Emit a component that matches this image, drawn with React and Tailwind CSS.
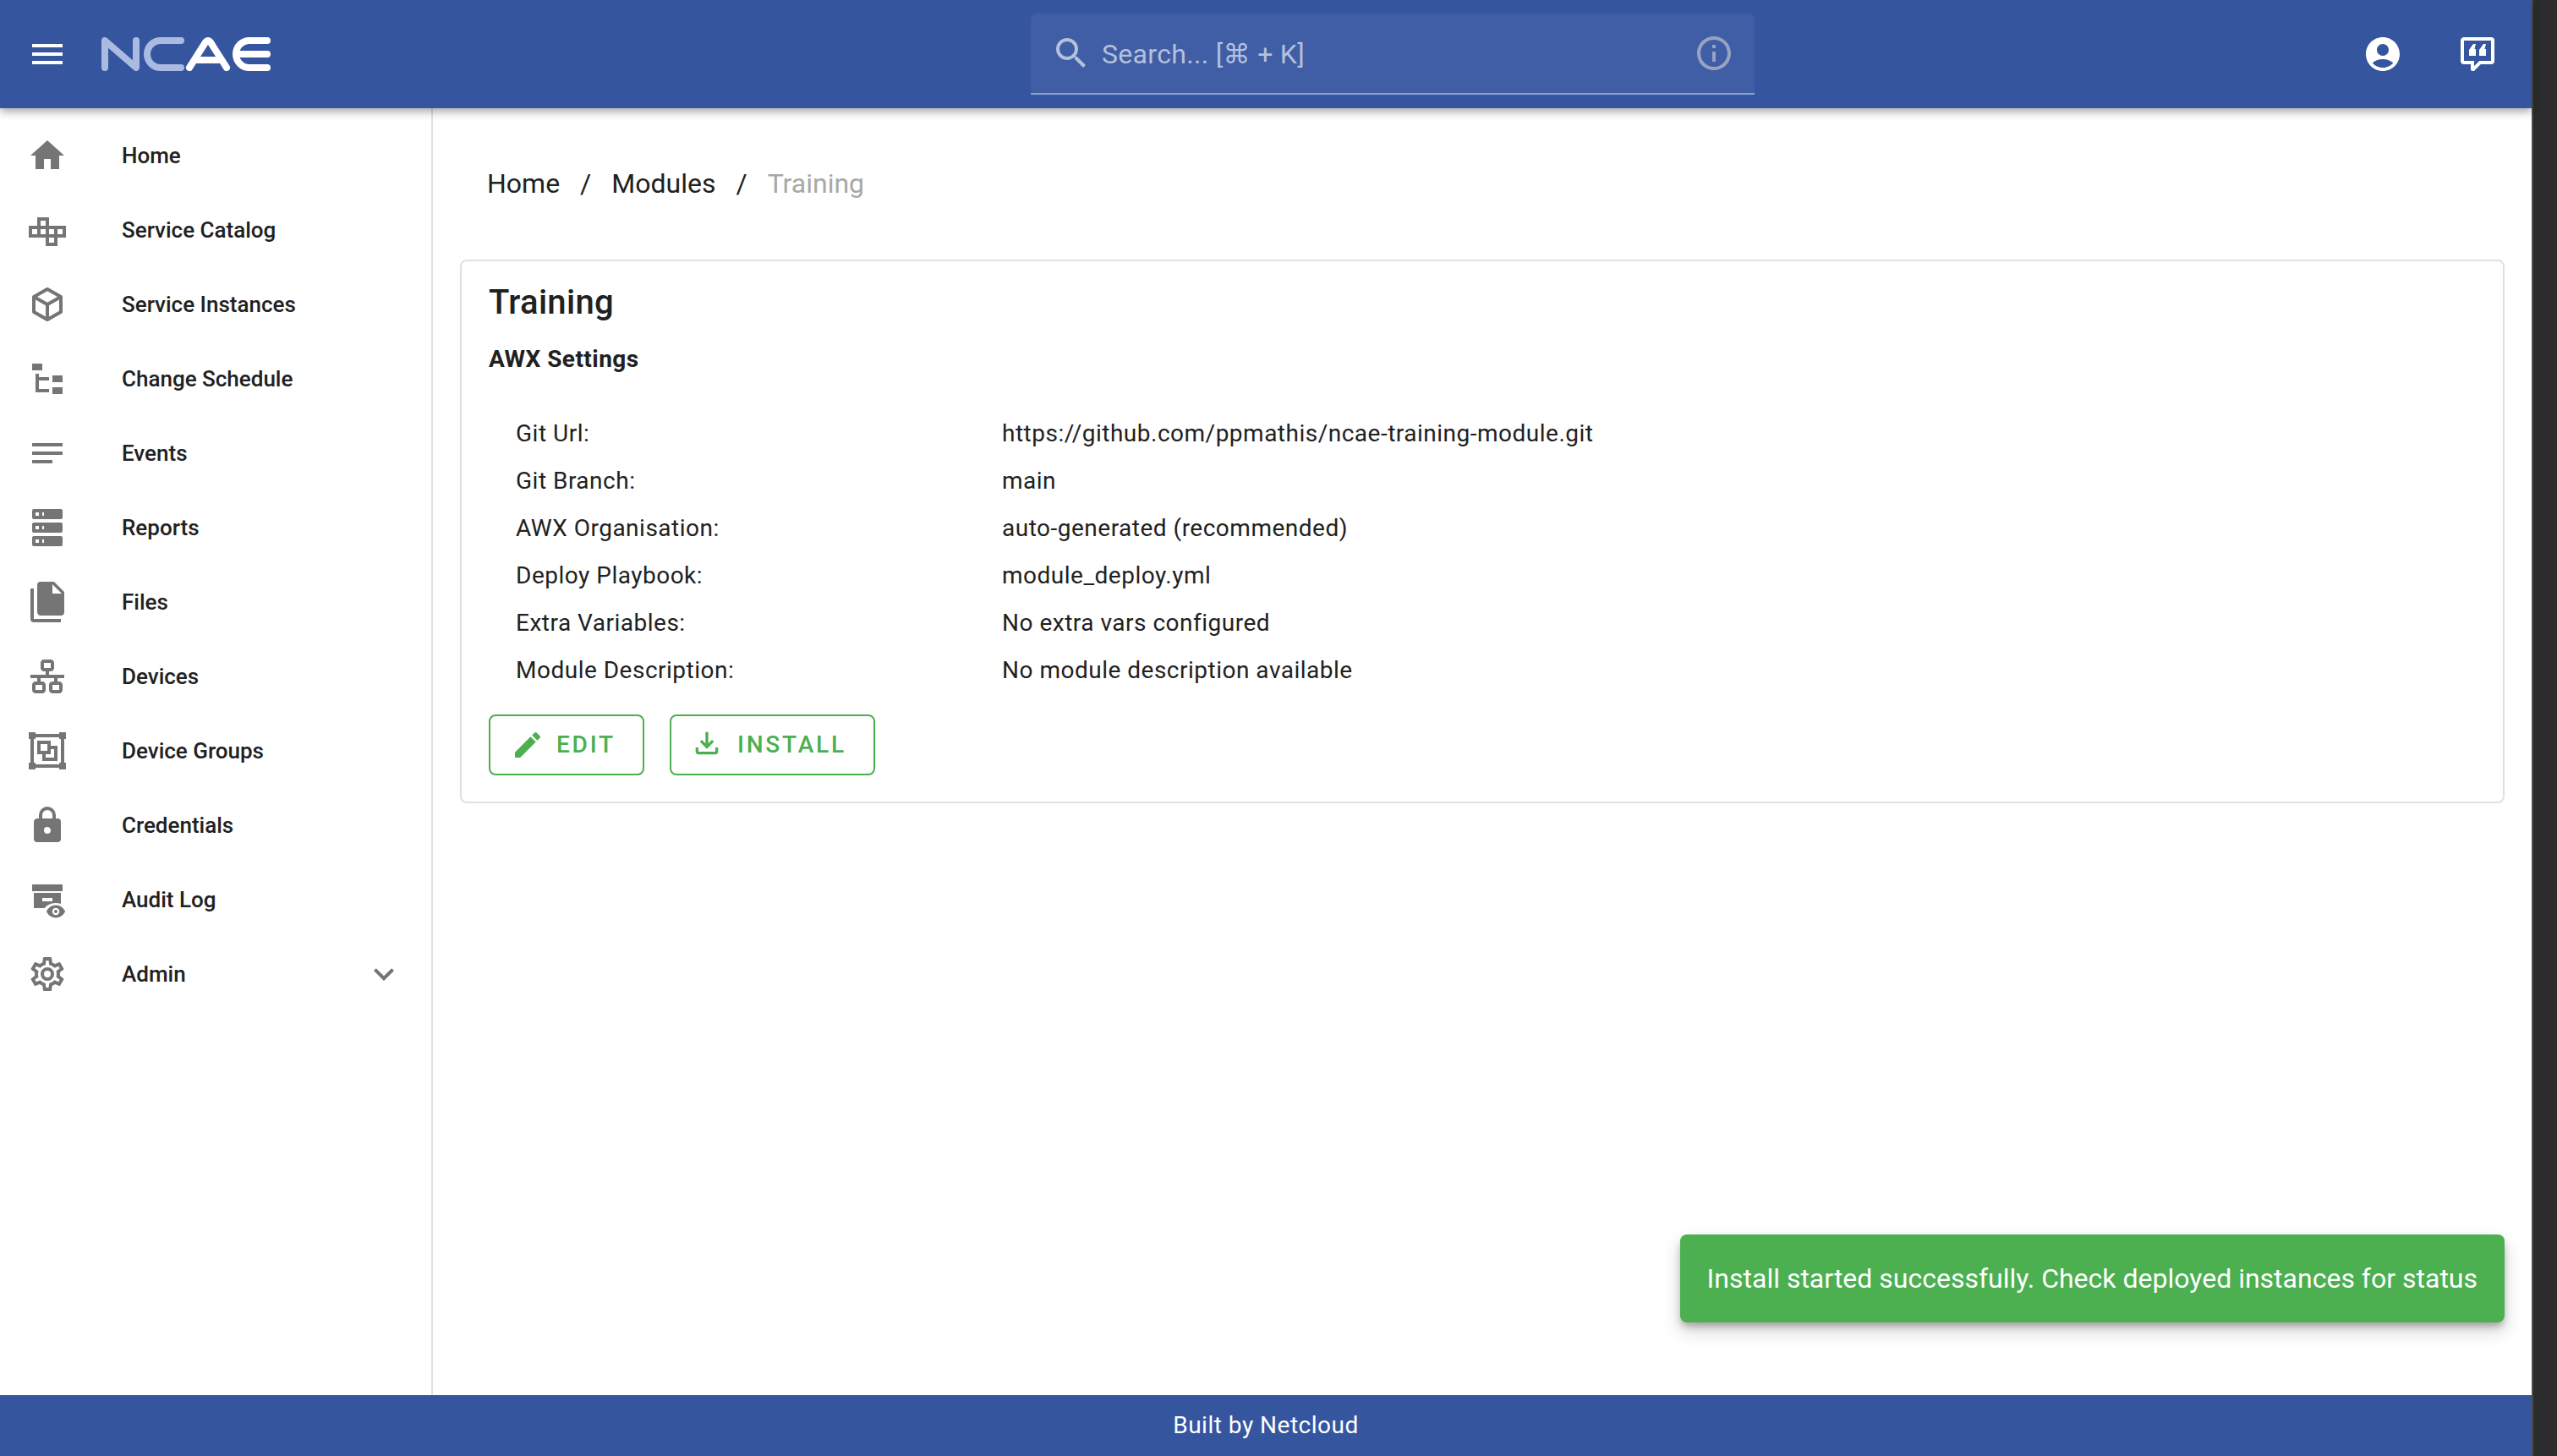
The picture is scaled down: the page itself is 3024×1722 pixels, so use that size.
import React from "react";
import {
  MdMenu,
  MdSearch,
  MdInfoOutline,
  MdAccountCircle,
  MdHome,
  MdNotes,
  MdExpandMore,
  MdEdit,
  MdOutlineFileDownload,
} from "react-icons/md";

const Icon = ({ d }) => (
  <svg viewBox="0 0 24 24" className="w-12 h-12 fill-current">
    <path d={d} />
  </svg>
);

const CatalogIcon = () => (
  <svg viewBox="0 0 24 24" className="w-12 h-12 fill-none stroke-current" strokeWidth="2">
    <path d="M2 10.5H22V15.5H2ZM7 15.5V5.5H12V20.5H17V10.5" />
  </svg>
);

const AuditIcon = () => (
  <svg viewBox="0 0 24 24" className="w-12 h-12 fill-current">
    <path d="M3 3H21V7H3ZM4 8H20V17H4ZM9 11V13H15V11Z" fillRule="evenodd" />
    <ellipse cx="17" cy="19" rx="7.2" ry="5" className="fill-white" />
    <path d="M11.5 19C12.4 16.8 14.5 15.3 17 15.3C19.5 15.3 21.6 16.8 22.5 19C21.6 21.2 19.5 22.7 17 22.7C14.5 22.7 12.4 21.2 11.5 19Z" />
    <circle cx="17" cy="19" r="2.1" className="fill-white" />
    <circle cx="17" cy="19" r="1" />
  </svg>
);

const navItems = [
  { label: "Home", icon: <MdHome className="w-12 h-12" /> },
  { label: "Service Catalog", icon: <CatalogIcon /> },
  {
    label: "Service Instances",
    icon: (
      <Icon d="M21,16.5C21,16.88 20.79,17.21 20.47,17.38L12.57,21.82C12.41,21.94 12.21,22 12,22C11.79,22 11.59,21.94 11.43,21.82L3.53,17.38C3.21,17.21 3,16.88 3,16.5V7.5C3,7.12 3.21,6.79 3.53,6.62L11.43,2.18C11.59,2.06 11.79,2 12,2C12.21,2 12.41,2.06 12.57,2.18L20.47,6.62C20.79,6.79 21,7.12 21,7.5V16.5M12,4.15L6.04,7.5L12,10.85L17.96,7.5L12,4.15M5,15.91L11,19.29V12.58L5,9.21V15.91M19,15.91V9.21L13,12.58V19.29L19,15.91Z" />
    ),
  },
  {
    label: "Change Schedule",
    icon: <Icon d="M3,3H9V7H3V3M15,10H21V14H15V10M15,17H21V21H15V17M13,13H7V18H13V20H7L5,20V9H7V11H13V13Z" />,
  },
  { label: "Events", icon: <MdNotes className="w-12 h-12" /> },
  {
    label: "Reports",
    icon: (
      <Icon d="M4,1H20A1,1 0 0,1 21,2V6A1,1 0 0,1 20,7H4A1,1 0 0,1 3,6V2A1,1 0 0,1 4,1M4,9H20A1,1 0 0,1 21,10V14A1,1 0 0,1 20,15H4A1,1 0 0,1 3,14V10A1,1 0 0,1 4,9M4,17H20A1,1 0 0,1 21,18V22A1,1 0 0,1 20,23H4A1,1 0 0,1 3,22V18A1,1 0 0,1 4,17M9,5H10V3H9V5M9,13H10V11H9V13M9,21H10V19H9V21M5,3V5H7V3H5M5,11V13H7V11H5M5,19V21H7V19H5Z" />
    ),
  },
  {
    label: "Files",
    icon: (
      <Icon d="M15,7H20.5L15,1.5V7M8,0H16L22,6V18A2,2 0 0,1 20,20H8C6.89,20 6,19.1 6,18V2A2,2 0 0,1 8,0M4,4V22H20V24H4A2,2 0 0,1 2,22V4H4Z" />
    ),
  },
  {
    label: "Devices",
    icon: (
      <Icon d="M10,2C8.89,2 8,2.89 8,4V7C8,8.11 8.89,9 10,9H11V11H2V13H6V15H5C3.89,15 3,15.89 3,17V20C3,21.11 3.89,22 5,22H9C10.11,22 11,21.11 11,20V17C11,15.89 10.11,15 9,15H8V13H16V15H15C13.89,15 13,15.89 13,17V20C13,21.11 13.89,22 15,22H19C20.11,22 21,21.11 21,20V17C21,15.89 20.11,15 19,15H18V13H22V11H13V9H14C15.11,9 16,8.11 16,7V4C16,2.89 15.11,2 14,2H10M10,4H14V7H10V4M5,17H9V20H5V17M15,17H19V20H15V17Z" />
    ),
  },
  {
    label: "Device Groups",
    icon: (
      <Icon d="M1,1V5H2V19H1V23H5V22H19V23H23V19H22V5H23V1H19V2H5V1M5,4H19V5H20V19H19V20H5V19H4V5H5M6,6V14H9V18H18V9H14V6M8,8H12V12H8M14,11H16V16H11V14H14" />
    ),
  },
  {
    label: "Credentials",
    icon: (
      <Icon d="M12,17A2,2 0 0,0 14,15C14,13.89 13.1,13 12,13A2,2 0 0,0 10,15A2,2 0 0,0 12,17M18,8A2,2 0 0,1 20,10V20A2,2 0 0,1 18,22H6A2,2 0 0,1 4,20V10C4,8.89 4.9,8 6,8H7V6A5,5 0 0,1 12,1A5,5 0 0,1 17,6V8H18M12,3A3,3 0 0,0 9,6V8H15V6A3,3 0 0,0 12,3Z" />
    ),
  },
  { label: "Audit Log", icon: <AuditIcon /> },
  {
    label: "Admin",
    expandable: true,
    icon: (
      <Icon d="M12,8A4,4 0 0,1 16,12A4,4 0 0,1 12,16A4,4 0 0,1 8,12A4,4 0 0,1 12,8M12,10A2,2 0 0,0 10,12A2,2 0 0,0 12,14A2,2 0 0,0 14,12A2,2 0 0,0 12,10M10,22C9.75,22 9.54,21.82 9.5,21.58L9.13,18.93C8.5,18.68 7.96,18.34 7.44,17.94L4.95,18.95C4.73,19.03 4.46,18.95 4.34,18.73L2.34,15.27C2.21,15.05 2.27,14.78 2.46,14.63L4.57,12.97L4.5,12L4.57,11L2.46,9.37C2.27,9.22 2.21,8.95 2.34,8.73L4.34,5.27C4.46,5.05 4.73,4.96 4.95,5.05L7.44,6.05C7.96,5.66 8.5,5.32 9.13,5.07L9.5,2.42C9.54,2.18 9.75,2 10,2H14C14.25,2 14.46,2.18 14.5,2.42L14.87,5.07C15.5,5.32 16.04,5.66 16.56,6.05L19.05,5.05C19.27,4.96 19.54,5.05 19.66,5.27L21.66,8.73C21.79,8.95 21.73,9.22 21.54,9.37L19.43,11L19.5,12L19.43,13L21.54,14.63C21.73,14.78 21.79,15.05 21.66,15.27L19.66,18.73C19.54,18.95 19.27,19.04 19.05,18.95L16.56,17.95C16.04,18.34 15.5,18.68 14.87,18.93L14.5,21.58C14.46,21.82 14.25,22 14,22H10M11.25,4L10.88,6.61C9.68,6.86 8.62,7.5 7.85,8.39L5.44,7.35L4.69,8.65L6.8,10.2C6.4,11.37 6.4,12.64 6.8,13.8L4.68,15.36L5.43,16.66L7.86,15.62C8.63,16.5 9.68,17.14 10.87,17.38L11.24,20H12.76L13.13,17.39C14.32,17.14 15.37,16.5 16.14,15.62L18.57,16.66L19.32,15.36L17.2,13.81C17.6,12.64 17.6,11.37 17.2,10.2L19.31,8.65L18.56,7.35L16.15,8.39C15.38,7.5 14.32,6.86 13.12,6.62L12.75,4H11.25Z" />
    ),
  },
];

const settings = [
  ["Git Url:", "https://github.com/ppmathis/ncae-training-module.git"],
  ["Git Branch:", "main"],
  ["AWX Organisation:", "auto-generated (recommended)"],
  ["Deploy Playbook:", "module_deploy.yml"],
  ["Extra Variables:", "No extra vars configured"],
  ["Module Description:", "No module description available"],
];

const Logo = () => (
  <svg viewBox="120 44 200 40" className="w-[200px] h-10 fill-none" strokeWidth="8" strokeLinecap="round" strokeLinejoin="round">
    <g className="stroke-[#a9bbe0]">
      <path d="M124 80V48L161 80V48" />
      <path d="M214 48H190A16 16 0 0 0 190 80H214" />
    </g>
    <g className="stroke-white">
      <path d="M224 80L243 50Q246 46 249 50L268 80" />
      <path d="M233 71H258" />
      <path d="M316 48H295A16 16 0 0 0 295 80H316" />
      <path d="M282 64H316" />
    </g>
  </svg>
);

const App = () => {
  return (
    <div className="relative flex h-screen w-full overflow-hidden bg-white font-[Roboto,'DejaVu_Sans',sans-serif] text-[#212121]">
      <div className="flex flex-1 flex-col min-w-0">
        <header className="relative z-10 flex h-32 shrink-0 items-center bg-[#35569f] text-white shadow-[0_4px_10px_rgba(0,0,0,0.35)]">
          <div className="flex w-[1219px] shrink-0 items-center gap-10 pl-8">
            <MdMenu className="w-12 h-12" />
            <Logo />
          </div>
          <div className="flex h-24 w-[856px] items-center rounded-t-lg border-b-2 border-[#8d9fcb] bg-[#3f5ea5] pl-6 pr-6">
            <MdSearch className="w-12 h-12 text-[#b4c0dc]" />
            <span className="ml-3 pt-[1px] text-[32px] tracking-[0.32px] text-[#b4c0dc]">Search... [⌘ + K]</span>
            <MdInfoOutline className="ml-auto w-12 h-12 text-[#98a3c0]" />
          </div>
          <div className="ml-auto flex items-center gap-16 pr-10">
            <MdAccountCircle className="w-12 h-12" />
            <svg viewBox="0 0 24 24" className="w-12 h-12 fill-current">
              <path
                fillRule="evenodd"
                d="M9,22A1,1 0 0,1 8,21V18H4A2,2 0 0,1 2,16V4C2,2.89 2.9,2 4,2H20A2,2 0 0,1 22,4V16A2,2 0 0,1 20,18H13.9L10.2,21.71C10,21.9 9.75,22 9.5,22H9M10,16V19.08L13.08,16H20V4H4V16H10Z"
              />
              <path d="M9.5 6H11L10.2 9H11V13H7V9.5ZM15.5 6H17L16.2 9H17V13H13V9.5Z" />
            </svg>
          </div>
        </header>

        <div className="flex flex-1 min-h-0">
          <aside className="w-[512px] shrink-0 border-r-2 border-[#e0e0e0] pt-3">
            {navItems.map((item) => (
              <div key={item.label} className="flex h-[88px] items-center pl-8 pr-8">
                <span className="w-28 shrink-0 text-[#757575]">{item.icon}</span>
                <span className="text-[26px] font-medium">{item.label}</span>
                {item.expandable && <MdExpandMore className="ml-auto w-12 h-12 text-[#757575]" />}
              </div>
            ))}
          </aside>

          <main className="flex-1 min-w-0 px-8">
            <nav className="flex h-[179px] items-center gap-6 pl-8 pb-[1px] text-[32px]">
              <span>Home</span>
              <span>/</span>
              <span>Modules</span>
              <span>/</span>
              <span className="text-[#a8a8a8]">Training</span>
            </nav>
            <section className="rounded-lg border-2 border-[#e0e0e0] px-8 pt-[25px] pb-[31px]">
              <h2 className="text-[40px] leading-[48px] font-medium tracking-[0.3px]">Training</h2>
              <h3 className="mt-[23px] text-[28px] leading-10 font-bold tracking-[0.45px]">AWX Settings</h3>
              <div className="mt-10">
                {settings.map(([label, value]) => (
                  <div key={label} className="flex h-14 items-center pl-8 text-[28px] tracking-[0.5px]">
                    <span className="w-[575px] shrink-0">{label}</span>
                    <span>{value}</span>
                  </div>
                ))}
              </div>
              <div className="mt-6 flex gap-[30px]">
                <button className="flex h-[72px] items-center rounded-lg border-2 border-[#4caf50] pl-6 pr-8 text-[28px] font-medium tracking-[2.8px] text-[#4caf50]">
                  <MdEdit className="mr-[14px] w-10 h-10" />
                  EDIT
                </button>
                <button className="flex h-[72px] items-center rounded-lg border-2 border-[#4caf50] pl-[22px] pr-8 text-[28px] font-medium tracking-[2.8px] text-[#4caf50]">
                  <MdOutlineFileDownload className="mr-4 w-10 h-10 -translate-y-0.5" />
                  INSTALL
                </button>
              </div>
            </section>
          </main>
        </div>

        <footer className="flex h-[72px] shrink-0 items-center justify-center bg-[#35569f] text-[28px] tracking-[0.5px] text-white">
          Built by Netcloud
        </footer>
      </div>

      <div className="w-[30px] shrink-0 border-l-2 border-[#4a4a4a] bg-[#2c2c2c]" />

      <div className="absolute right-[62px] bottom-[158px] flex h-[104px] items-center rounded-lg bg-[#4caf50] px-8 text-[32px] text-white shadow-[0_6px_10px_-2px_rgba(0,0,0,0.3),0_10px_20px_2px_rgba(0,0,0,0.14)]">
        Install started successfully. Check deployed instances for status
      </div>
    </div>
  );
};

export default App;
